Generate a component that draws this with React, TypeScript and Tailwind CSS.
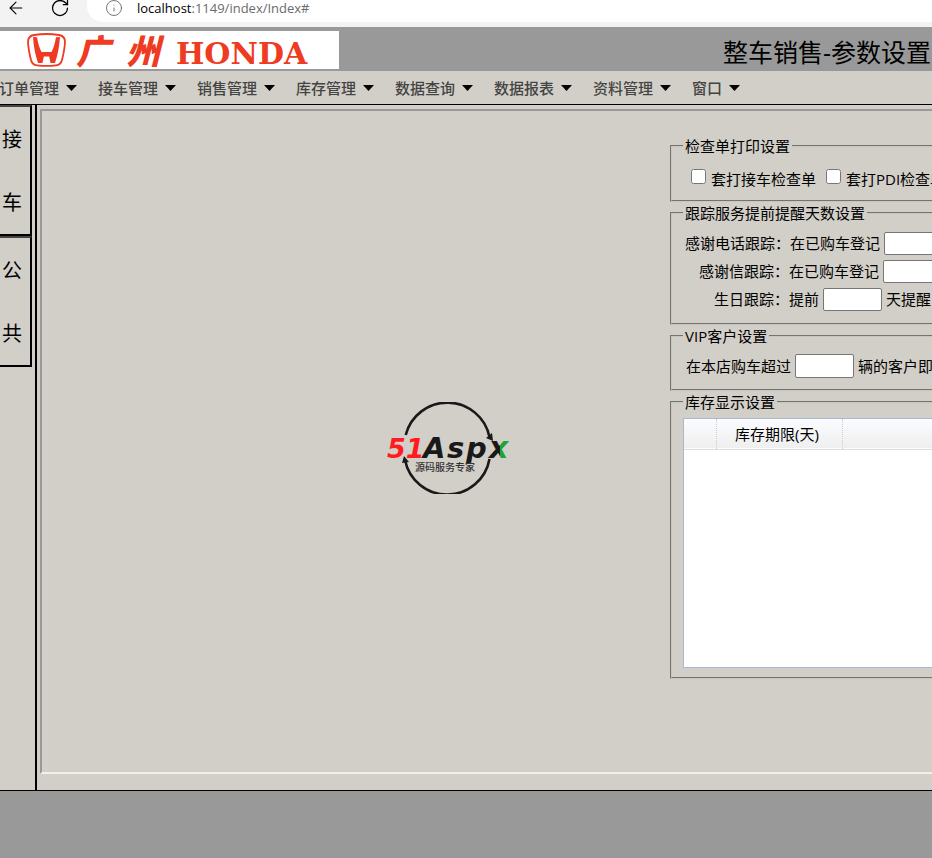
import { ArrowLeft, Info, RotateCw } from "lucide-react";

const menus = ["订单管理", "接车管理", "销售管理", "库存管理", "数据查询", "数据报表", "资料管理", "窗口"];

const sideTabs = [
  { id: "receive", chars: ["接", "车"] },
  { id: "public", chars: ["公", "共"] },
];

const groupClass = "min-w-0 w-[480px] border-2 [border-style:groove] border-[#c8c6c0] px-[11px]";
const legendClass = "px-[2px] text-[15px] leading-5";
const boxClass = "mx-1 w-[59px] rounded-[2px] border border-[#767676] bg-white px-1 text-sm outline-none";

function HondaLogo() {
  return (
    <div className="flex h-[38px] w-[339px] items-center bg-white pl-[26px] text-[#ee3b22]">
      <svg width="41" height="34" viewBox="0 0 41 34" fill="none">
        <path
          d="M8 2C16 .7 25 .7 33 2c4 .6 6 3 6 7-.3 7-1.500 12-3 18-1 4-3 5-6 5.300-6 .7-13 .7-19 0-3-.3-5-1.300-6-5.300C3.500 21 2.300 16 2 9c0-4 2-6.400 6-7Z"
          stroke="currentColor"
          strokeWidth="1.800"
        />
        <path
          d="M7 4l4 .2c1 6 2.500 11 4.500 14.800h10C27.500 15.200 29 10.200 30 4.200L34 4c-.6 9-2.300 18-5 26h-4.500l-1.300-6.500h-5.400L16.500 30H12C9.300 22 7.600 13 7 4Z"
          fill="currentColor"
        />
      </svg>
      <div className="ml-[9px] flex gap-4 font-['Noto_Sans_CJK_SC',sans-serif] text-[34px] leading-[38px] font-black italic">
        <span>广</span>
        <span>州</span>
      </div>
      <span className="ml-4 pt-2 font-['DejaVu_Serif',serif] text-[30px] leading-[30px] font-bold">HONDA</span>
    </div>
  );
}

function AspxLogo() {
  return (
    <svg width="126" height="92" viewBox="0 0 126 92" role="img" aria-label="51Aspx">
      <defs>
        <linearGradient id="xFill">
          <stop offset="0.55" stopColor="#191919" />
          <stop offset="0.55" stopColor="#20a336" />
        </linearGradient>
      </defs>
      <g fill="none" stroke="#191919" strokeWidth="2.600">
        <path d="M18.700 33A43 43 0 0 1 102.500 35" />
        <path d="M18 58A43 43 0 0 0 102.500 57" />
      </g>
      <path d="M99 36l6-5 1 8zM15 61l2-7 5 6z" fill="#191919" />
      <g fontFamily="DejaVu Sans, sans-serif" fontWeight="bold" fontStyle="italic">
        <text x="0" y="56" fontSize="27" fill="#ff1b20">51</text>
        <text x="36" y="56" fontSize="29" fill="#191919">A</text>
        <text x="60" y="56" fontSize="29" fill="#191919">s</text>
        <text x="79" y="56" fontSize="29" fill="#191919">p</text>
        <text x="102" y="56" fontSize="30" fill="url(#xFill)">x</text>
      </g>
      <text x="28" y="69" fontSize="10" fontWeight="500" fill="#333" fontFamily="Noto Sans CJK SC, sans-serif">
        源码服务专家
      </text>
    </svg>
  );
}

export default function App() {
  return (
    <div className="flex min-h-screen flex-col overflow-hidden bg-[#d2cfc8] font-['Open_Sans','Noto_Sans_CJK_SC',sans-serif] text-[15px] whitespace-nowrap text-black">
      {/* 浏览器地址栏 */}
      <div className="flex h-[27px] items-start bg-[#f3f3f3]">
        <button type="button" aria-label="返回" className="ml-[6px]">
          <ArrowLeft size={20} strokeWidth={1.3} className="-mt-[2px]" />
        </button>
        <button type="button" aria-label="刷新" className="ml-6">
          <RotateCw size={20} strokeWidth={1.5} className="-mt-[2px]" />
        </button>
        <div className="ml-[17px] flex h-[22px] flex-1 items-start rounded-bl-2xl bg-white pl-[18px]">
          <Info size={18} strokeWidth={1.2} className="-mt-px text-[#666]" />
          <span className="ml-[14px] text-[13px] leading-4 text-[#6b6b6b]">
            <span className="text-black">localhost</span>:1149/index/Index#
          </span>
        </div>
      </div>

      {/* 顶部 */}
      <header className="flex h-11 items-center justify-between bg-[#999] pt-[2px]">
        <HondaLogo />
        <h1 className="pt-1 pr-px text-[25px] leading-[38px]">整车销售-参数设置</h1>
      </header>

      <nav className="-ml-px flex h-[34px] items-center gap-5 border-b border-black pt-px">
        {menus.map((name) => (
          <button key={name} type="button" className="flex items-center gap-[7px] pr-px font-medium text-[#444]">
            {name}
            <svg width="11" height="6" viewBox="0 0 11 6">
              <path d="M0 0h11L5.500 6z" fill="#000" />
            </svg>
          </button>
        ))}
      </nav>

      <main className="flex flex-1 border-b border-black">
        <aside className="w-[37px] shrink-0 border-r-2 border-black">
          {sideTabs.map((tab) => (
            <button
              key={tab.id}
              type="button"
              className="flex h-[131px] w-8 flex-col items-center justify-around border-t-2 border-r-2 border-b-2 border-black border-t-[#444] pt-[2px] pr-[6px] text-[20px]"
            >
              {tab.chars.map((c) => (
                <span key={c}>{c}</span>
              ))}
            </button>
          ))}
        </aside>

        <section className="mt-1 mb-4 ml-[3px] flex min-w-0 flex-1 overflow-hidden border-2 border-r-0 border-[#999] border-b-[#f1efe9]">
          <div className="flex flex-1 items-center justify-end pt-3 pr-[157px]">
            <AspxLogo />
          </div>

          <form className="flex w-[262px] shrink-0 flex-col gap-px pt-[25px]">
            <fieldset className={`${groupClass} h-[66px]`}>
              <legend className={legendClass}>检查单打印设置</legend>
              <div className="flex items-start pt-[13px] pl-2 leading-5">
                <input id="receiveSheet" type="checkbox" className="size-[15px]" />
                <label htmlFor="receiveSheet" className="ml-[5px]">套打接车检查单</label>
                <input id="pdiSheet" type="checkbox" className="ml-[10px] size-[15px]" />
                <label htmlFor="pdiSheet" className="ml-[5px]">套打PDI检查单</label>
              </div>
            </fieldset>

            <fieldset className={`${groupClass} h-[122px]`}>
              <legend className={legendClass}>跟踪服务提前提醒天数设置</legend>
              <div className="flex flex-col gap-[5px] pt-[9px] pl-[2px] leading-[23px]">
                <div className="flex">
                  <label htmlFor="phoneDays">感谢电话跟踪：在已购车登记</label>
                  <input id="phoneDays" type="text" className={`${boxClass} h-[23px]`} />
                  <span>天后提醒</span>
                </div>
                <div className="flex pl-[14px]">
                  <label htmlFor="letterDays">感谢信跟踪：在已购车登记</label>
                  <input id="letterDays" type="text" className={`${boxClass} h-[23px]`} />
                  <span>天后提醒</span>
                </div>
                <div className="flex pl-[29px]">
                  <label htmlFor="birthDays">生日跟踪：提前</label>
                  <input id="birthDays" type="text" className={`${boxClass} h-[23px]`} />
                  <span>天提醒</span>
                </div>
              </div>
            </fieldset>

            <fieldset className={`${groupClass} h-[65px]`}>
              <legend className={legendClass}>VIP客户设置</legend>
              <div className="flex pt-2 pl-[3px] leading-6">
                <label htmlFor="vipCount">在本店购车超过</label>
                <input id="vipCount" type="text" className={`${boxClass} h-6`} />
                <span>辆的客户即为VIP客户</span>
              </div>
            </fieldset>

            <fieldset className={`${groupClass} h-[287px]`}>
              <legend className={legendClass}>库存显示设置</legend>
              <div className="mt-[6px] h-[250px] border border-[#a9b7d1] bg-white">
                <table className="w-full table-fixed border-collapse">
                  <thead>
                    <tr className="h-[30px] border-b border-[#ddd] bg-linear-to-b from-[#fafcff] to-[#efefef]">
                      <th className="w-8 border-r border-dotted border-[#ccc]" />
                      <th className="w-[126px] border-r border-dotted border-[#ccc] p-0 pr-1 text-center text-[15px] leading-5 font-normal">
                        库存期限(天)
                      </th>
                      <th />
                    </tr>
                  </thead>
                </table>
              </div>
            </fieldset>
          </form>
        </section>
      </main>

      <footer className="h-[67px] bg-[#999]" />
    </div>
  );
}
